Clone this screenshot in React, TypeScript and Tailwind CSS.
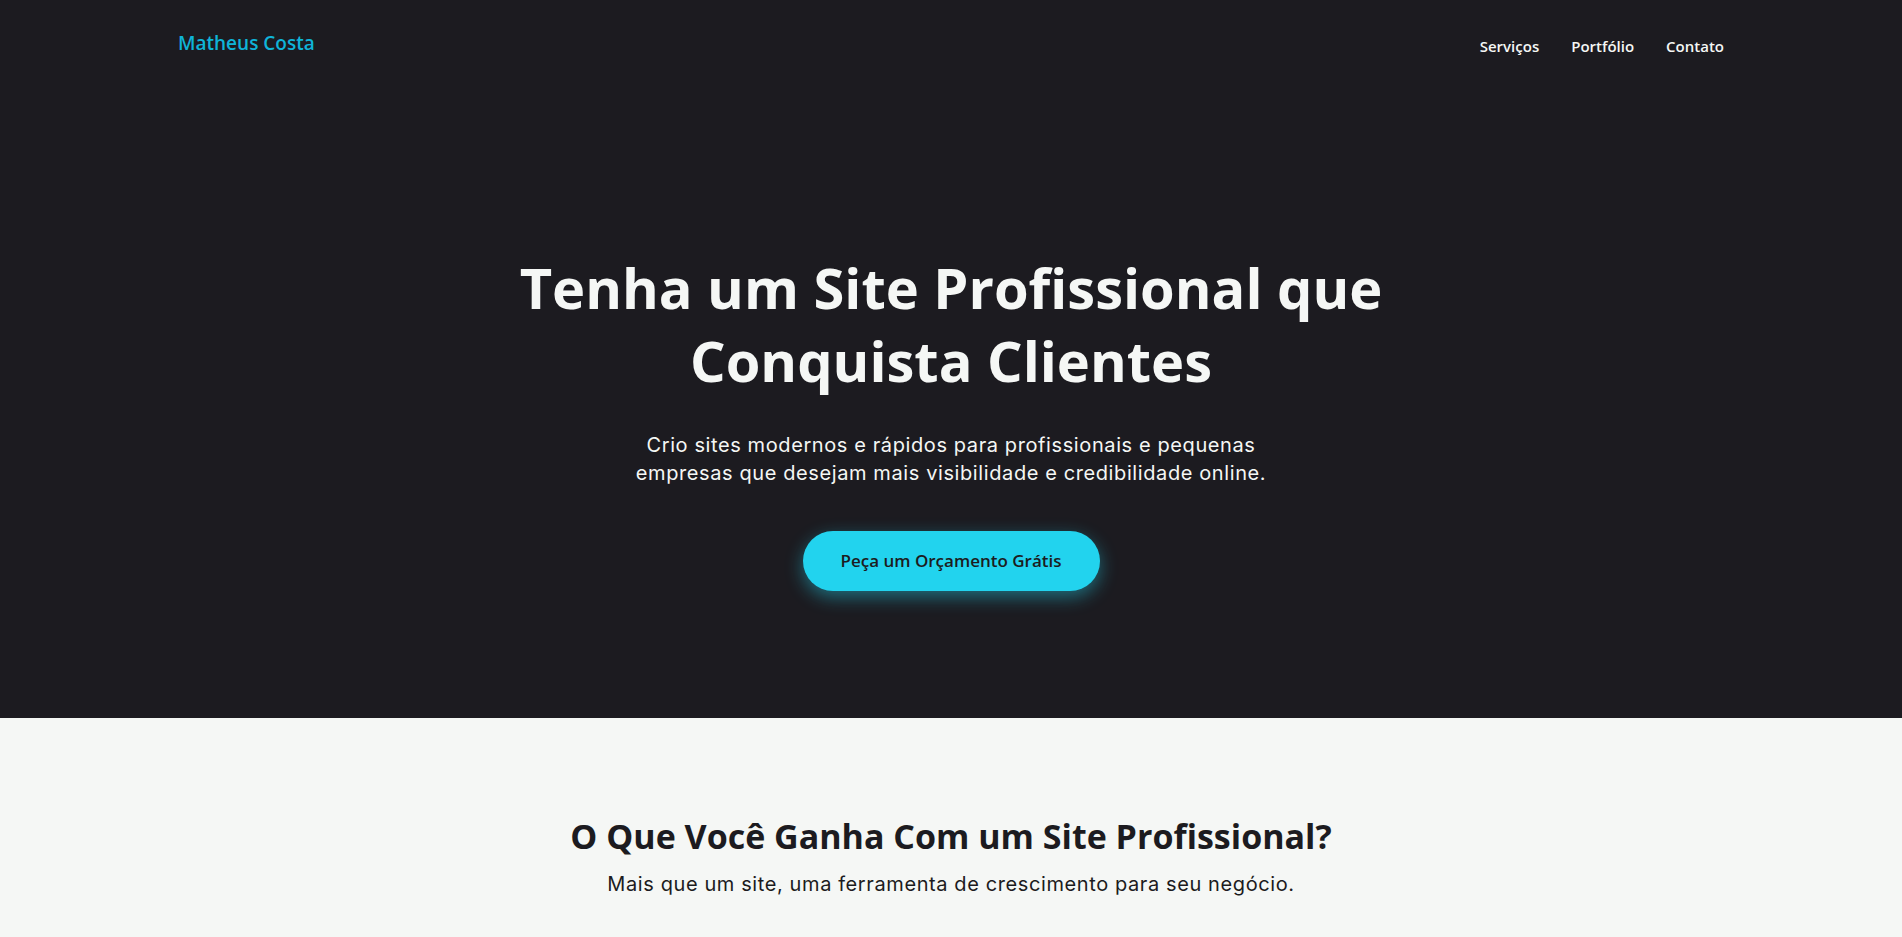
export default function App() {
  const heading = { fontFamily: '"Open Sans", "Noto Sans", sans-serif' }
  const body = { fontFamily: 'Inter, "Noto Sans", sans-serif' }

  return (
    <div className="min-h-screen bg-[#f5f7f5]">
      {/* hero */}
      <section className="bg-[#1c1b20]">
        <header className="flex h-[86px] items-center justify-between px-[178px]" style={heading}>
          <a className="text-[19px] font-semibold text-[#0fb4d8]">Matheus Costa</a>
          <nav className="mt-[6px] flex gap-[32px] text-[15px] font-semibold text-[#f5f7f5]">
            <a>Serviços</a>
            <a>Portfólio</a>
            <a>Contato</a>
          </nav>
        </header>

        <div className="flex flex-col items-center pt-[165px] pb-[127px] text-center">
          <h1 className="text-[56px] font-bold leading-[73px] text-[#f5f7f5]" style={heading}>
            Tenha um Site Profissional que
            <br />
            Conquista Clientes
          </h1>
          <p className="mt-[34px] text-[20px] leading-[28px] tracking-[0.6px] text-[#f5f7f5]" style={body}>
            Crio sites modernos e rápidos para profissionais e pequenas
            <br />
            empresas que desejam mais visibilidade e credibilidade online.
          </p>
          <button
            className="mt-[44px] h-[60px] w-[297px] rounded-full bg-[#22d3ee] text-[17px] font-semibold text-[#1c1b20] shadow-[0_6px_18px_rgba(34,211,238,0.45)]"
            style={heading}
          >
            Peça um Orçamento Grátis
          </button>
        </div>
      </section>

      {/* benefits */}
      <section className="flex flex-col items-center pt-[97px] pb-[80px] text-center">
        <h2 className="text-[34px] font-bold leading-[42px] text-[#1c1b20]" style={heading}>
          O Que Você Ganha Com um Site Profissional?
        </h2>
        <p className="mt-[13px] text-[20px] leading-[28px] tracking-[0.6px] text-[#1c1b20]" style={body}>
          Mais que um site, uma ferramenta de crescimento para seu negócio.
        </p>
      </section>
    </div>
  )
}
